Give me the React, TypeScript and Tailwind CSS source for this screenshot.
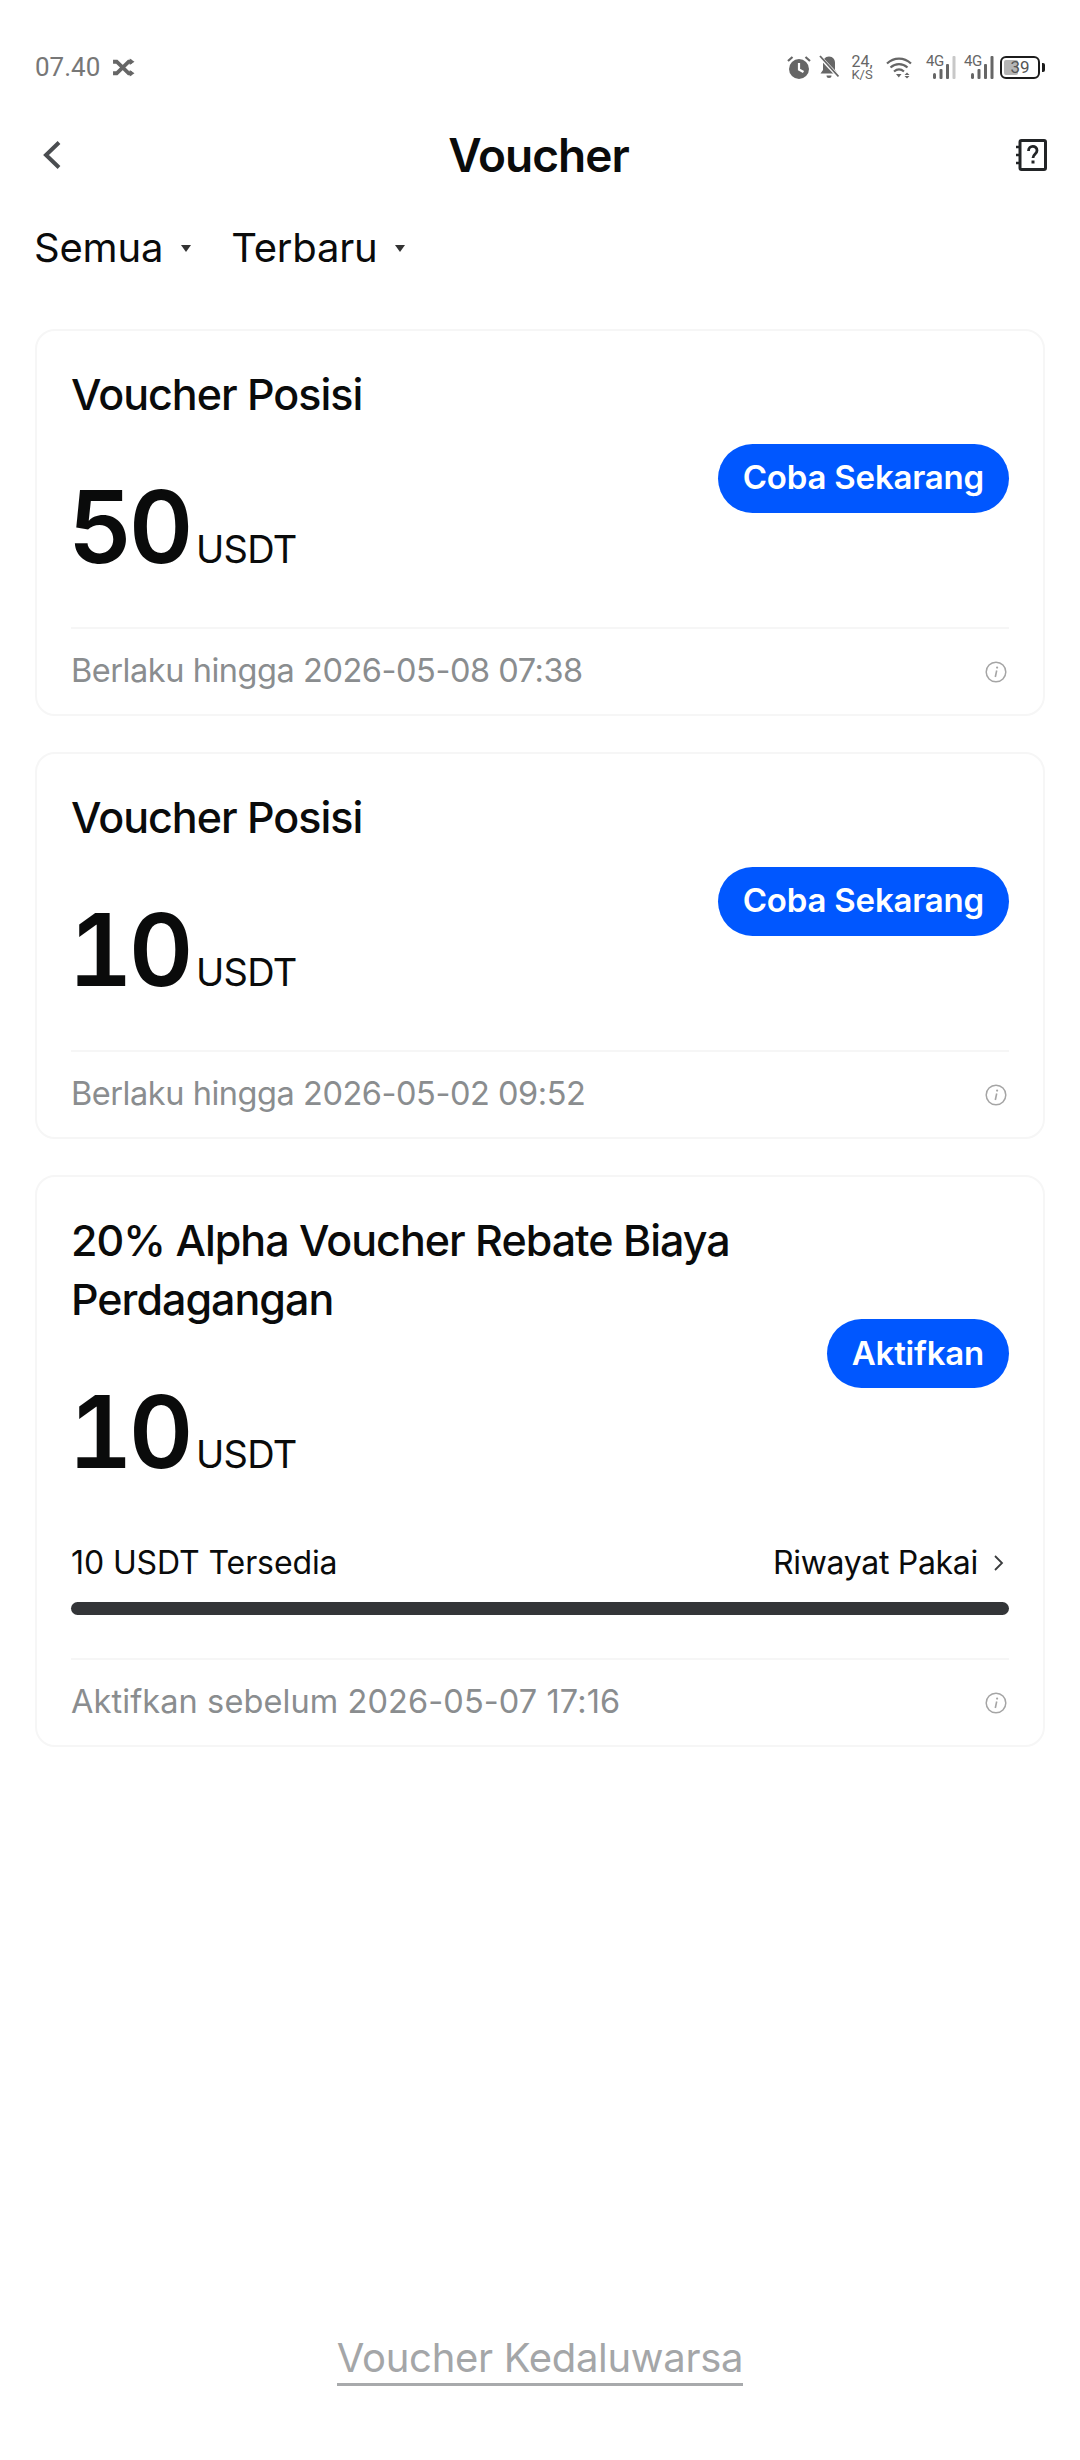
import type { ReactNode } from "react"

function ShuffleIcon() {
  return (
    <svg viewBox="0 0 22 18" className="h-[19px] w-[23px]" fill="none" stroke="#666666">
      <path d="M1 3.5h3.5L16 14.5h3M1 14.5h3.5L16 3.5h3" strokeWidth="3.6" />
      <path d="M17 0.5l4.5 3-4.5 3zM17 11.5l4.5 3-4.5 3z" fill="#666666" stroke="none" />
    </svg>
  )
}

function AlarmIcon() {
  return (
    <svg viewBox="0 0 24 24" className="h-[25px] w-[24px]">
      <circle cx="12" cy="13.5" r="10" fill="#666666" />
      <path d="M1 5.5L5.5 1.5M23 5.5L18.5 1.5" stroke="#666666" strokeWidth="2.2" />
      <path d="M12 7.5v6.5l4.5 2.5" stroke="#ffffff" strokeWidth="2.2" fill="none" />
    </svg>
  )
}

function BellOffIcon() {
  return (
    <svg viewBox="0 0 20 24" className="h-[24px] w-[20px]">
      <path
        d="M10 1.5c-4 0-6 3-6 6.5v7L1.5 18.5h17L16 15V8c0-3.5-2-6.5-6-6.5z"
        fill="#666666"
      />
      <path d="M7.5 20.5h5a2.5 2.5 0 0 1-5 0z" fill="#666666" />
      <path d="M0.5 1.5L19 21" stroke="#ffffff" strokeWidth="3.6" />
      <path d="M1 1L19.5 21.5" stroke="#666666" strokeWidth="1.8" />
    </svg>
  )
}

function WifiIcon() {
  return (
    <svg viewBox="0 0 26 23" className="h-[23px] w-[26px]" fill="none">
      <path d="M1 7.5C8 1 18 1 25 7.5" stroke="#666666" strokeWidth="2.2" />
      <path d="M4.5 11.5C9.5 7 16.5 7 21.5 11.5" stroke="#666666" strokeWidth="2.2" />
      <path d="M8 15.5C11 13 15 13 18 15.5" stroke="#666666" strokeWidth="2.2" />
      <path d="M10 18h5.5l-2.7 3.5zM21 16.5l2.5 2.5h-5zM18.5 20h5L21 22.5z" fill="#666666" />
    </svg>
  )
}

function SignalIcon({ faded }: { faded?: boolean }) {
  return (
    <div className="relative h-[24px] w-[30px]">
      <span className="absolute top-[-1px] left-0 font-['Roboto',sans-serif] text-[15px] leading-[14px] tracking-[-0.4px] text-[#666666]">
        4G
      </span>
      <svg viewBox="0 0 30 24" className="absolute inset-0 h-[24px] w-[30px]">
        <rect x="7" y="18" width="3" height="6" rx="1.5" fill="#666666" />
        <rect x="13.5" y="14" width="3" height="10" rx="1" fill="#666666" />
        <rect x="20" y="9" width="3" height="15" rx="1" fill="#666666" />
        <rect x="26.5" y="1" width="3" height="23" rx="1" fill={faded ? "#c8c8c8" : "#666666"} />
      </svg>
    </div>
  )
}

function BookHelpIcon() {
  return (
    <svg viewBox="0 0 31 32" className="h-[32px] w-[31px]" fill="none">
      <rect x="4" y="1.5" width="25.5" height="29" rx="1.5" stroke="#222426" strokeWidth="3" />
      <path d="M0 8h5M0 16h5M0 24h5" stroke="#222426" strokeWidth="2.6" />
      <path
        d="M12.5 12c0-6 8.5-6 8.5-.5 0 3.5-4 3.5-4 7.5"
        stroke="#222426"
        strokeWidth="2.8"
      />
      <rect x="15.5" y="21.5" width="3" height="3" fill="#222426" />
    </svg>
  )
}

function InfoIcon() {
  return (
    <svg viewBox="0 0 22 22" className="h-[22px] w-[22px]" fill="none">
      <circle cx="11" cy="11" r="9.8" stroke="#a5a5a5" strokeWidth="1.5" />
      <path d="M11.7 9.5l-1.4 6.5" stroke="#a5a5a5" strokeWidth="1.6" />
      <circle cx="12.1" cy="6.6" r="1.1" fill="#a5a5a5" />
    </svg>
  )
}

function Caret() {
  return <span className="h-0 w-0 border-x-[5px] border-t-[7px] border-x-transparent border-t-[#333333]" />
}

function Amount({ value }: { value: string }) {
  return (
    <div className="flex items-baseline pt-[53px] pb-[14px]">
      <span className="ml-[-3px] w-[128px] text-[100px] leading-[100px] font-semibold tracking-[-4px] text-[#0a0b0b] tabular-nums">
        {value}
      </span>
      <span className="text-[38px] leading-[40px] tracking-[-0.7px] text-[#0a0b0b]">USDT</span>
    </div>
  )
}

function VoucherCard({
  title,
  value,
  action,
  footer,
  footerClass,
  children,
}: {
  title: string
  value: string
  action: string
  footer: string
  footerClass: string
  children?: ReactNode
}) {
  return (
    <div className="rounded-[20px] border-2 border-[#f6f6f6] bg-white px-[34px]">
      <div className="flex items-center justify-between pt-[34px]">
        <div className="min-w-0 flex-1">
          <h2 className="text-[43px] leading-[59px] font-medium tracking-[-1px] text-[#0a0b0b]">{title}</h2>
          <Amount value={value} />
        </div>
        <button className="ml-[30px] flex h-[69px] shrink-0 items-center rounded-full bg-[#0057ff] px-[25px] text-[33px] font-semibold tracking-[-0.2px] text-white">
          {action}
        </button>
      </div>
      {children}
      <div className="mt-[36px] flex h-[87px] items-center justify-between border-t-2 border-[#f6f6f6]">
        <span className={`text-[32.5px] text-[#8a8d8f] ${footerClass}`}>{footer}</span>
        <span className="mr-[2px]">
          <InfoIcon />
        </span>
      </div>
    </div>
  )
}

export default function App() {
  return (
    <div className="flex min-h-[2460px] flex-col bg-white font-['Inter',sans-serif]">
      <div className="mt-[43px] flex h-[48px] items-center justify-between px-[35px]">
        <div className="flex items-center gap-[12px]">
          <span className="font-['Roboto',sans-serif] text-[26px] text-[#777777]">07.40</span>
          <ShuffleIcon />
        </div>
        <div className="flex items-center">
          <AlarmIcon />
          <span className="ml-[8px]">
            <BellOffIcon />
          </span>
          <div className="ml-[12px] flex w-[22px] flex-col items-center font-['Roboto',sans-serif] text-[#666666]">
            <span className="text-[16px] leading-[15px]">24,</span>
            <span className="text-[13px] leading-[12px]">K/S</span>
          </div>
          <span className="ml-[13px]">
            <WifiIcon />
          </span>
          <span className="ml-[14px]">
            <SignalIcon faded />
          </span>
          <span className="ml-[8px]">
            <SignalIcon />
          </span>
          <div className="ml-[6px] flex items-center">
            <div className="relative flex h-[23px] w-[40px] items-center justify-center rounded-[6px] border-2 border-[#1c1c1c] font-['Roboto',sans-serif] text-[17px] leading-none text-[#555555]">
              <span className="absolute top-[2px] bottom-[2px] left-[2px] w-[14px] rounded-[2px] bg-[#b5b5b5]" />
              <span className="relative">39</span>
            </div>
            <span className="ml-[2px] h-[9px] w-[3px] rounded-r-[2px] bg-[#1c1c1c]" />
          </div>
        </div>
      </div>

      <header className="mt-[20px] flex h-[88px] items-center justify-between pr-[33px] pl-[43px]">
        <svg viewBox="0 0 18 28" className="h-[28px] w-[18px]" fill="none">
          <path d="M16 1.5L3 14l13 12.5" stroke="#4a4d50" strokeWidth="4" />
        </svg>
        <h1 className="text-[46px] font-semibold tracking-[-1px] text-[#0a0b0b]">Voucher</h1>
        <BookHelpIcon />
      </header>

      <div className="mt-[9px] flex h-[80px] items-center pr-[35px] pl-[34px] text-[#0a0b0b]">
        <div className="flex items-center gap-[18px]">
          <span className="text-[40px] tracking-[-0.2px]">Semua</span>
          <Caret />
        </div>
        <div className="ml-[40px] flex items-center gap-[17px]">
          <span className="text-[40px] tracking-[-0.2px]">Terbaru</span>
          <Caret />
        </div>
      </div>

      <main className="mt-[41px] flex flex-1 flex-col gap-[36px] px-[35px]">
        <VoucherCard
          title="Voucher Posisi"
          value="50"
          action="Coba Sekarang"
          footer="Berlaku hingga 2026-05-08 07:38"
          footerClass="tracking-[-0.45px]"
        />
        <VoucherCard
          title="Voucher Posisi"
          value="10"
          action="Coba Sekarang"
          footer="Berlaku hingga 2026-05-02 09:52"
          footerClass="tracking-[-0.45px]"
        />
        <VoucherCard
          title="20% Alpha Voucher Rebate Biaya Perdagangan"
          value="10"
          action="Aktifkan"
          footer="Aktifkan sebelum 2026-05-07 17:16"
          footerClass="tracking-[0.1px]"
        >
          <div className="mt-[42px] flex h-[50px] items-center justify-between text-[32px] tracking-[-0.3px] text-[#0a0b0b]">
            <span className="tracking-[-0.1px]">10 USDT Tersedia</span>
            <div className="flex items-center gap-[16px]">
              <span>Riwayat Pakai</span>
              <svg viewBox="0 0 10 16" className="mr-[5px] h-[16px] w-[10px]" fill="none">
                <path d="M1 1l7 7-7 7" stroke="#3a3c3e" strokeWidth="1.8" />
              </svg>
            </div>
          </div>
          <div className="mt-[14px] mb-[43px] h-[13px] rounded-full bg-[#333538]" />
        </VoucherCard>
      </main>

      <div className="mb-[74px] flex justify-center">
        <span className="border-b-[3px] border-[#a8aaac] text-[40px] leading-[50px] tracking-[-0.3px] text-[#a4a6a8]">
          Voucher Kedaluwarsa
        </span>
      </div>
    </div>
  )
}
